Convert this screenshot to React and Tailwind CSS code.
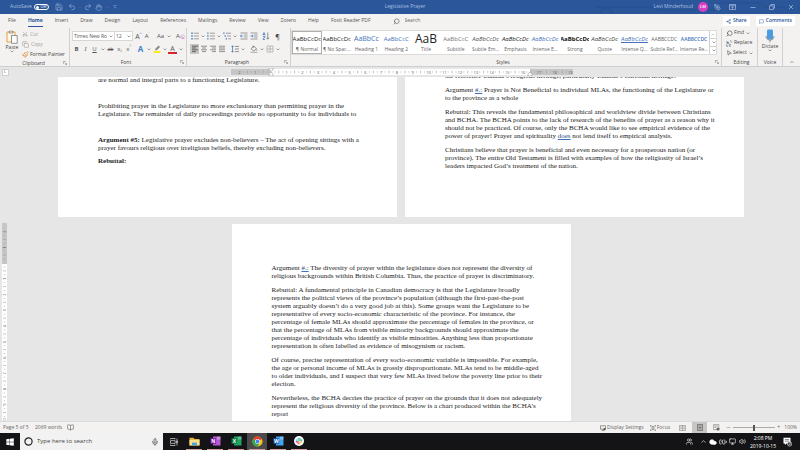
import React from "react";
import {
  Search, Mic, Save, Undo2, Redo2, Hand, PenTool, Scissors, Copy, Paintbrush, Share2, MessageSquare,
  Users, Cloud, Volume2, Monitor, BatteryCharging, ChevronUp, MousePointer2, Eraser, BookOpen, Minus,
} from "lucide-react";

const SANS = "font-['Open_Sans','Noto_Sans',sans-serif]";
const SERIF = "font-['Liberation_Serif','Times_New_Roman',serif]";

function Chev({ className = "" }) {
  return (
    <span className={"flex w-[7px] shrink-0 items-center justify-center " + className}>
      <svg width="4" height="3" viewBox="0 0 4 3" aria-hidden="true">
        <path d="M0.6 0.6 2 2 3.4 0.6" fill="none" stroke="#777" strokeWidth="0.7" />
      </svg>
    </span>
  );
}

function Tool({ label, children, className = "" }) {
  return (
    <button type="button" aria-label={label} className={"flex h-[10px] w-[9px] shrink-0 items-center justify-center leading-none " + className}>
      {children}
    </button>
  );
}

function Lines({ rows, color = "#777" }) {
  return (
    <svg width="8" height="8" viewBox="0 0 8 8" aria-hidden="true">
      {rows.map(([x, w], i) => (
        <path key={i} d={`M${x} ${1.2 + i * 1.8}h${w}`} stroke={color} strokeWidth="0.8" />
      ))}
    </svg>
  );
}

function ListIcon({ kind }) {
  return (
    <svg width="8" height="8" viewBox="0 0 8 8" aria-hidden="true">
      {[1.2, 4, 6.8].map((y, i) => {
        const off = kind === "multi" ? i * 1.2 : 0;
        return (
          <g key={y}>
            {kind === "bullet" ? (
              <rect x="0.3" y={y - 0.7} width="1.4" height="1.4" fill="#2f6fb8" />
            ) : (
              <path d={`M${0.9 + off} ${y - 1}v2`} stroke="#2f6fb8" strokeWidth="0.8" />
            )}
            <path d={`M${2.8 + off} ${y}H8`} stroke="#888" strokeWidth="0.8" />
          </g>
        );
      })}
    </svg>
  );
}

function IndentIcon({ flip }) {
  return (
    <svg width="8" height="8" viewBox="0 0 8 8" aria-hidden="true">
      <path d="M0.5 1h7M4.2 3h3.3M4.2 5h3.3M0.5 7h7" stroke="#777" strokeWidth="0.7" />
      <path d={flip ? "M0.4 4h2.8M2 2.9 3.2 4 2 5.1" : "M3.2 4H0.4M1.6 2.9 0.4 4l1.2 1.1"} stroke="#2f6fb8" strokeWidth="0.7" fill="none" />
    </svg>
  );
}

function Group({ label, launcher, className = "", children }) {
  return (
    <section aria-label={label} className={"flex flex-col border-r border-[#d2d0ce] " + className}>
      <div className="flex h-[31px] items-start">{children}</div>
      <div className="flex h-[8px] items-center text-[5px] leading-[8px] text-[#444]">
        <span className="flex-1 text-center">{label}</span>
        {launcher && (
          <button type="button" aria-label={label + " settings"} className="mr-[2px]">
            <svg width="4" height="4" viewBox="0 0 4 4"><path d="M0.4 3V0.4H3M1.6 1.6 3.5 3.5M3.6 2v1.6H2" fill="none" stroke="#888" strokeWidth="0.6" /></svg>
          </button>
        )}
      </div>
    </section>
  );
}

const tabs = ["File", "Home", "Insert", "Draw", "Design", "Layout", "References", "Mailings", "Review", "View", "Zotero", "Help", "Foxit Reader PDF"];

const styles = [
  ["¶ Normal", "AaBbCcDc", "text-[6px] text-[#222]"],
  ["¶ No Spac...", "AaBbCcDc", "text-[6px] text-[#222]"],
  ["Heading 1", "AaBbCc", "text-[7px] text-[#4472b8]"],
  ["Heading 2", "AaBbCcC", "text-[6px] text-[#4472b8]"],
  ["Title", "AaB", "text-[12px] text-[#222]"],
  ["Subtitle", "AaBbCcC", "text-[6px] text-[#777]"],
  ["Subtle Em...", "AaBbCcDc", "text-[6px] italic text-[#555]"],
  ["Emphasis", "AaBbCcDc", "text-[6px] italic text-[#222]"],
  ["Intense E...", "AaBbCcDc", "text-[6px] italic text-[#4472b8]"],
  ["Strong", "AaBbCcDc", "text-[6px] font-bold text-[#111]"],
  ["Quote", "AaBbCcDc", "text-[6px] italic text-[#444]"],
  ["Intense Q...", "AaBbCcDc", "text-[6px] italic text-[#4472b8] underline"],
  ["Subtle Ref...", "AABBCCDC", "text-[5px] text-[#666]"],
  ["Intense Re...", "AABBCCDC", "text-[5px] font-semibold text-[#4472b8]"],
];

function TitleBar() {
  return (
    <header className="relative flex h-[14px] shrink-0 items-center bg-[#2b579a] pl-[10px] text-[5px] text-[#a9bfe0]">
      <svg className="absolute right-0 top-0" width="210" height="14" viewBox="0 0 210 14" aria-hidden="true">
        <path d="M5 7h58l4 3h60M10 14a6 6 0 0 1 12 0M130 3h40l5 4h20" fill="none" stroke="#264f8f" strokeWidth="1" />
      </svg>
      <div className="relative flex flex-1 items-center">
        <label htmlFor="autosave" className="w-[24px]">AutoSave</label>
        <span className="relative flex h-[6px] w-[15px] items-center rounded-full border border-white">
          <input id="autosave" type="checkbox" className="absolute inset-0 m-0 opacity-0" />
          <span className="ml-px size-[3px] rounded-full bg-white" />
          <span className="flex-1 text-center text-[4px] leading-none text-white">Off</span>
        </span>
        <div className="ml-[5px] flex items-center text-[#8fabd8]">
          <Tool label="Save"><Save size={8} /></Tool>
          <span className="w-[4px]" />
          <Tool label="Undo"><Undo2 size={8} /></Tool>
          <Chev className="opacity-50" />
          <Tool label="Redo"><Redo2 size={8} /></Tool>
          <span className="w-[2px]" />
          <Tool label="Touch mode"><Hand size={7} /></Tool>
          <Chev className="opacity-50" />
          <Tool label="Customize toolbar">
            <svg width="4" height="4" viewBox="0 0 4 4"><path d="M0.5 0.6h3M0.8 2 2 3.2 3.2 2" fill="none" stroke="currentColor" strokeWidth="0.6" /></svg>
          </Tool>
        </div>
      </div>
      <h1 className="relative">Legislative Prayer</h1>
      <div className="relative flex flex-1 items-center justify-end">
        <span>Levi Minderhoud</span>
        <span className="ml-[5px] flex size-[10px] items-center justify-center rounded-full bg-[#d83fc0] text-[4px] font-semibold text-white">LM</span>
        <Tool label="Draw" className="ml-[5px]"><PenTool size={7} /></Tool>
        <Tool label="Ribbon display options" className="ml-[6px]">
          <svg width="7" height="6" viewBox="0 0 7 6"><path d="M0.5 0.5h6v5h-6zM0.5 1.8h6M3.5 4.8V2.8M2.6 3.6l.9-.9.9.9" fill="none" stroke="currentColor" strokeWidth="0.7" /></svg>
        </Tool>
        <Tool label="Minimize" className="ml-[11px]"><svg width="6" height="6"><path d="M0.5 3.5h5" stroke="currentColor" strokeWidth="0.7" /></svg></Tool>
        <Tool label="Restore" className="ml-[10px]"><svg width="6" height="6"><path d="M0.5 1.8h3.7v3.7H0.5zM1.8 1.8V0.5h3.7v3.7H4.2" fill="none" stroke="currentColor" strokeWidth="0.7" /></svg></Tool>
        <Tool label="Close" className="mr-[5px] ml-[10px]"><svg width="6" height="6"><path d="M1 1l4 4M5 1 1 5" stroke="currentColor" strokeWidth="0.7" /></svg></Tool>
      </div>
    </header>
  );
}

function TabRow() {
  return (
    <nav aria-label="Ribbon" className="flex h-[14px] shrink-0 items-center gap-3 pl-[8px] pr-[5px] text-[5px] text-[#555]">
      {tabs.map((t) => (
        <button
          key={t}
          type="button"
          className={"h-[11px] whitespace-nowrap border-b " + (t === "Home" ? "border-[#2b579a] font-bold text-[#2b579a]" : "border-transparent")}
        >
          {t}
        </button>
      ))}
      <label className="ml-[10px] flex flex-1 items-center gap-[5px]">
        <Search size={7} className="-scale-x-100 shrink-0" />
        <input aria-label="Search" placeholder="Search" className="w-full bg-transparent outline-none placeholder:text-[#666]" />
      </label>
      <div className="flex gap-[6px] font-semibold text-[#2b579a]">
        <button type="button" className="flex h-[10px] items-center gap-[2px] bg-white px-[3px]"><Share2 size={5} />Share</button>
        <button type="button" className="flex h-[10px] items-center gap-[2px] bg-white px-[3px]"><MessageSquare size={5} />Comments</button>
      </div>
    </nav>
  );
}

function FontGroup() {
  return (
    <Group label="Font" launcher className="w-[117px] pl-[2px]">
      <div className="flex flex-col gap-[3px] pt-[3px]">
        <div className="flex h-[10px] items-center text-[#555]">
          <div className="flex h-[10px] w-[43px] items-center border border-[#d8d6d4] bg-white">
            <select aria-label="Font" className="h-full min-w-0 flex-1 appearance-none bg-transparent pl-px text-[5px] leading-none outline-none">
              <option>Times New Roman</option>
            </select>
            <Chev />
          </div>
          <div className="flex h-[10px] w-[18px] items-center border border-l-0 border-[#d8d6d4] bg-white">
            <select aria-label="Font size" className="h-full min-w-0 flex-1 appearance-none bg-transparent pl-px text-[5px] leading-none outline-none">
              <option>12</option>
            </select>
            <Chev />
          </div>
          <Tool label="Grow font" className="ml-[1px] text-[7px]">A<sup className="text-[4px] text-[#2f6fb8]">^</sup></Tool>
          <Tool label="Shrink font" className="text-[6px]">A<sup className="text-[4px] text-[#2f6fb8]">ˇ</sup></Tool>
          <Tool label="Change case" className="ml-[4px] text-[6px]">Aa</Tool>
          <Chev />
          <Tool label="Clear formatting" className="ml-[4px] text-[6px]">A<Eraser size={5} color="#b05ac0" /></Tool>
        </div>
        <div className="flex items-center text-[6px] text-[#555]">
          <Tool label="Bold" className="font-bold">B</Tool>
          <Tool label="Italic" className={"italic " + SERIF}>I</Tool>
          <Tool label="Underline" className="underline">U</Tool>
          <Chev />
          <Tool label="Strikethrough" className="text-[5px] line-through">ab</Tool>
          <Tool label="Subscript">x<sub className="text-[4px]">₂</sub></Tool>
          <Tool label="Superscript">x<sup className="text-[4px]">²</sup></Tool>
          <Tool label="Text effects" className="ml-[3px] text-[8px] font-bold text-[#3f83c8]">A</Tool>
          <Chev />
          <Tool label="Highlight">
            <svg width="8" height="8" viewBox="0 0 8 8"><path d="M0.5 6h7v2h-7z" fill="#f7ee1c" /><path d="M2 5.5 2.6 3.6 5.6 0.6 7 2 4 5z" fill="#888" /></svg>
          </Tool>
          <Chev />
          <Tool label="Font color" className="border-b-2 border-[#d8242f] text-[7px]">A</Tool>
          <Chev />
        </div>
      </div>
    </Group>
  );
}

function ParagraphGroup() {
  return (
    <Group label="Paragraph" launcher className="w-[104px] pl-[3px]">
      <div className="flex flex-col gap-[3px] pt-[3px]">
        <div className="flex items-center">
          <Tool label="Bullets"><ListIcon kind="bullet" /></Tool><Chev />
          <Tool label="Numbering"><ListIcon kind="number" /></Tool><Chev />
          <Tool label="Multilevel list"><ListIcon kind="multi" /></Tool><Chev />
          <Tool label="Decrease indent" className="ml-[1px]"><IndentIcon /></Tool>
          <Tool label="Increase indent" className="ml-[1px]"><IndentIcon flip /></Tool>
          <Tool label="Sort" className="ml-[3px]">
            <svg width="8" height="8" viewBox="0 0 8 8"><path d="M0.8 3.4 2 0.5l1.2 2.9M1.2 2.5h1.6M0.9 4.6h2.2L0.9 7.4h2.2" fill="none" stroke="#2f6fb8" strokeWidth="0.7" /><path d="M5.8 0.5v6.6M4.4 5.7l1.4 1.5 1.4-1.5" fill="none" stroke="#666" strokeWidth="0.7" /></svg>
          </Tool>
          <Tool label="Show formatting marks" className="ml-[3px] text-[7px] text-[#444]">¶</Tool>
        </div>
        <div className="flex items-center">
          <Tool label="Align left" className="bg-[#c8c6c4]"><Lines color="#444" rows={[[1, 6], [1, 4], [1, 6], [1, 4]]} /></Tool>
          <Tool label="Center"><Lines rows={[[1, 6], [2, 4], [1, 6], [2, 4]]} /></Tool>
          <Tool label="Align right"><Lines rows={[[1, 6], [3, 4], [1, 6], [3, 4]]} /></Tool>
          <Tool label="Justify"><Lines rows={[[1, 6], [1, 6], [1, 6], [1, 6]]} /></Tool>
          <Tool label="Line spacing" className="ml-[4px]">
            <svg width="8" height="8" viewBox="0 0 8 8"><path d="M3.8 1.4H8M3.8 4H8M3.8 6.6H8" stroke="#777" strokeWidth="0.8" /><path d="M1.5 0.8v6.4M0.4 2l1.1-1.2L2.6 2M0.4 6l1.1 1.2L2.6 6" fill="none" stroke="#2f6fb8" strokeWidth="0.7" /></svg>
          </Tool>
          <Chev />
          <Tool label="Shading" className="ml-[3px]">
            <svg width="8" height="8" viewBox="0 0 8 8"><path d="M1 3.8 3.8 1 6.4 3.8 3.8 6zM3.2 0.5v2.2M6.8 4.4v1.2" fill="none" stroke="#666" strokeWidth="0.7" /><path d="M0.5 7.3h7" stroke="#aaa" strokeWidth="1" /></svg>
          </Tool>
          <Chev />
          <Tool label="Borders">
            <svg width="8" height="8" viewBox="0 0 8 8"><path d="M1 1h6v6H1zM4 1v6M1 4h6" fill="none" stroke="#999" strokeWidth="0.6" /></svg>
          </Tool>
          <Chev />
        </div>
      </div>
    </Group>
  );
}

function Ribbon() {
  return (
    <div className="flex h-[39px] shrink-0 border-b border-[#d0cecc]">
      <Group label="Clipboard" launcher className="w-[70px] pl-[4px]">
        <button type="button" className="flex w-[16px] flex-col items-center text-[5px] leading-[6px] text-[#444]">
          <svg className="mt-[2px]" width="12" height="14" viewBox="0 0 12 14" aria-hidden="true">
            <path d="M1 2h8v10H1z" fill="#faf6ee" stroke="#e0a33c" strokeWidth="1" />
            <path d="M3.2 3V1.4h1a.9.9 0 0 1 1.7 0h1V3z" fill="#fff" stroke="#666" strokeWidth="0.7" />
            <path d="M5.5 5.5h5.7v7.8H5.5z" fill="#fff" stroke="#666" strokeWidth="0.7" />
          </svg>
          Paste
          <Chev />
        </button>
        <div className="ml-[2px] flex flex-col pt-[1px] text-[5px] leading-[10px] text-[#a19f9d]">
          <button type="button" className="flex h-[10px] items-center gap-[2px]"><Scissors size={6} className="-rotate-90" />Cut</button>
          <button type="button" className="flex h-[10px] items-center gap-[2px]"><Copy size={7} />Copy</button>
          <button type="button" className="flex h-[10px] items-center gap-[1px] whitespace-nowrap text-[#444]"><Paintbrush size={7} color="#d58a2a" />Format Painter</button>
        </div>
      </Group>
      <FontGroup />
      <ParagraphGroup />
      <Group label="Styles" launcher className="min-w-0 flex-1">
        <div className="mt-[2px] flex h-[25px] min-w-0 flex-1 border border-[#dddbd9] bg-white">
          <div className="flex min-w-0 flex-1">
            {styles.map(([name, sample, look], i) => (
              <button
                key={name}
                type="button"
                className={"flex min-w-0 flex-1 flex-col items-center overflow-hidden border " + (i === 0 ? "border-[#b0aeac]" : "border-transparent")}
              >
                <span className={"flex h-[14px] w-full items-center justify-center overflow-hidden whitespace-nowrap leading-[14px] " + look}>{sample}</span>
                <span className="whitespace-nowrap text-[5px] leading-[8px] text-[#666]">{name}</span>
              </button>
            ))}
          </div>
          <div className="flex w-[7px] flex-col divide-y divide-[#d2d0ce] border-l border-[#d2d0ce]">
            <button type="button" aria-label="Previous styles" className="flex flex-1 items-center"><Chev className="rotate-180 opacity-50" /></button>
            <button type="button" aria-label="Next styles" className="flex flex-1 items-center"><Chev /></button>
            <button type="button" aria-label="More styles" className="flex flex-1 items-center"><Chev /></button>
          </div>
        </div>
        <span className="w-[4px]" />
      </Group>
      <Group label="Editing" className="w-[36px] pl-[4px]">
        <div className="flex flex-col text-[5px] text-[#444]">
          <button type="button" className="flex h-[10px] items-center gap-[1px]"><Search size={7} className="-scale-x-100" />Find<Chev /></button>
          <button type="button" className="flex h-[10px] items-center gap-[2px]">
            <svg width="6" height="7" viewBox="0 0 6 7"><path d="M1 1v2.6M1 3.6h1.6V2.2H1M4.8 4.4H3.4v1.8h1.4" fill="none" stroke="#666" strokeWidth="0.7" /><path d="M0.6 4.6v1.6h1.4M4 0.6c1 0 1.4.8 1.4 2" fill="none" stroke="#2f6fb8" strokeWidth="0.7" /></svg>
            Replace
          </button>
          <button type="button" className="flex h-[10px] items-center gap-[1px]"><MousePointer2 size={6} className="rotate-12" />Select<Chev /></button>
        </div>
      </Group>
      <Group label="Voice" className="w-[25px]">
        <button type="button" className="flex w-full flex-col items-center text-[5px] leading-[6px] text-[#444]">
          <svg className="mt-[1px]" width="10" height="14" viewBox="0 0 10 14" aria-hidden="true">
            <rect x="2" y="0.5" width="6" height="10" rx="1.4" fill="#4b9be0" />
            <path d="M1 7c0 5.4 8 5.4 8 0M5 11v2.4" fill="none" stroke="#777" strokeWidth="0.8" />
          </svg>
          Dictate
          <Chev />
        </button>
      </Group>
      <div className="flex w-[17px] items-end justify-center pb-[1px]">
        <button type="button" aria-label="Collapse ribbon"><ChevronUp size={6} color="#555" /></button>
      </div>
    </div>
  );
}

const cm = (n) => (n * 40) / 2.54;

function TopRuler() {
  const ticks = Array.from({ length: 22 }, (_, i) => i - 2);
  return (
    <div className="flex h-[10px] shrink-0 bg-[#e6e6e6]">
      <div className="flex w-[10px] items-center justify-center">
        <div className="flex size-[7px] items-center justify-center border border-[#d0d0d0] bg-white text-[4px] leading-none text-[#555]">L</div>
      </div>
      <div className="flex flex-1 items-center justify-center pr-[8px]">
        <svg width="350" height="8" viewBox="-5 0 350 8" role="img" aria-label="Horizontal ruler">
          <path d="M0 1h342v6H0z" fill="#c6c6c6" />
          <path d="M40 1h259v6H40z" fill="#fff" />
          {ticks.map((n) => (
            <g key={n}>
              {n !== 0 && (
                <text x={40 + cm(n)} y="5.5" fontSize="4" fill="#555" textAnchor="middle">{Math.abs(n)}</text>
              )}
              {n < 19 && [0.25, 0.5, 0.75].map((f) => (
                <path key={f} d={`M${40 + cm(n + f)} ${f === 0.5 ? 2.6 : 3.4}v${f === 0.5 ? 2.8 : 1.2}`} stroke="#999" strokeWidth="0.6" />
              ))}
            </g>
          ))}
          <path d="M38 0h4v2l-2 1.4L38 2zM38 8h4V5.6l-2-1.4-2 1.4zM297 8h4V5.6l-2-1.4-2 1.4z" fill="#fafafa" stroke="#888" strokeWidth="0.5" />
        </svg>
      </div>
    </div>
  );
}

function SideRuler() {
  const ticks = Array.from({ length: 13 }, (_, i) => i - 2);
  return (
    <div className="w-[8px] shrink-0 overflow-hidden pl-[2px] pt-[146px]">
      <svg width="5" height="198" viewBox="0 0 5 198" role="img" aria-label="Vertical ruler">
        <path d="M0 0h5v41H0z" fill="#c6c6c6" />
        <path d="M0 41h5v157H0z" fill="#fff" />
        {ticks.map((n) => (
          <g key={n}>
            {n !== 0 && (
              <text transform={`translate(4 ${40 + cm(n)}) rotate(-90)`} fontSize="4" fill="#555" textAnchor="middle">{Math.abs(n)}</text>
            )}
            {[0.25, 0.5, 0.75].map((f) => (
              <path key={f} d={`M${f === 0.5 ? 1.2 : 1.9} ${40 + cm(n + f)}h${f === 0.5 ? 2.8 : 1.2}`} stroke="#999" strokeWidth="0.6" />
            ))}
          </g>
        ))}
      </svg>
    </div>
  );
}

function Para({ lines }) {
  return (
    <p className="whitespace-nowrap">
      {lines.map((line, i) => (
        <React.Fragment key={i}>
          {i > 0 && <br />}
          {line}
        </React.Fragment>
      ))}
    </p>
  );
}

const Flag = ({ children }) => <span className="text-[#2b4f80] underline decoration-[#3b6fc0]">{children}</span>;

function Page({ className = "", children }) {
  return (
    <article className={"flex w-[339px] shrink-0 flex-col overflow-hidden bg-white pl-[40px] text-[7px] leading-[8px] text-[#222] " + SERIF + " " + className}>
      {children}
    </article>
  );
}

function Document() {
  return (
    <main className="flex min-w-0 flex-1 flex-col gap-[7px] overflow-hidden pr-[6px]">
      <div className="flex justify-center gap-[8px]">
        <Page className="gap-[5px]">
          <div className="-mt-[1px]"><Para lines={["are normal and integral parts to a functioning Legislature."]} /></div>
          <p className="h-[8px]" />
          <Para lines={["Prohibiting prayer in the Legislature no more exclusionary than permitting prayer in the", "Legislature. The remainder of daily proceedings provide no opportunity to for individuals to"]} />
          <p className="h-[8px]" />
          <Para lines={[<><b>Argument #5:</b> Legislative prayer excludes non-believers – The act of opening sittings with a</>, "prayer favours religious over irreligious beliefs, thereby excluding non-believers."]} />
          <Para lines={[<b>Rebuttal:</b>]} />
        </Page>
        <Page className="gap-[6px] pb-[47px]">
          <div className="-mt-[5px]"><Para lines={["the reference Canada’s religious heritage, particularly Canada’s Christian heritage."]} /></div>
          <Para lines={[<>Argument <Flag>#.:</Flag> Prayer is Not Beneficial to individual MLAs, the functioning of the Legislature or</>, "to the province as a whole"]} />
          <Para
            lines={[
              "Rebuttal: This reveals the fundamental philosophical and worldview divide between Christians",
              "and BCHA. The BCHA points to the lack of research of the benefits of prayer as a reason why it",
              "should not be practiced. Of course, only the BCHA would like to see empirical evidence of the",
              <>power of prayer! Prayer and spirituality <Flag>does</Flag> not lend itself to empirical analysis.</>,
            ]}
          />
          <Para
            lines={[
              "Christians believe that prayer is beneficial and even necessary for a prosperous nation (or",
              "province). The entire Old Testament is filled with examples of how the religiosity of Israel’s",
              "leaders impacted God’s treatment of the nation.",
            ]}
          />
        </Page>
      </div>
      <div className="flex min-h-0 flex-1 justify-center">
        <Page className="gap-[6px] pt-[40px]">
          <Para lines={[<>Argument <Flag>#.:</Flag> The diversity of prayer within the legislature does not represent the diversity of</>, "religious backgrounds within British Columbia. Thus, the practice of prayer is discriminatory."]} />
          <Para
            lines={[
              "Rebuttal: A fundamental principle in Canadian democracy is that the Legislature broadly",
              "represents the political views of the province’s population (although the first-past-the-post",
              "system arguably doesn’t do a very good job at this). Some groups want the Legislature to be",
              "representative of every socio-economic characteristic of the province. For instance, the",
              "percentage of female MLAs should approximate the percentage of females in the province, or",
              "that the percentage of MLAs from visible minority backgrounds should approximate the",
              "percentage of individuals who identify as visible minorities. Anything less than proportionate",
              "representation is often labelled as evidence of misogynism or racism.",
            ]}
          />
          <Para
            lines={[
              "Of course, precise representation of every socio-economic variable is impossible. For example,",
              "the age or personal income of MLAs is grossly disproportionate. MLAs tend to be middle-aged",
              "to older individuals, and I suspect that very few MLAs lived below the poverty line prior to their",
              "election.",
            ]}
          />
          <Para
            lines={[
              "Nevertheless, the BCHA decries the practice of prayer on the grounds that it does not adequately",
              "represent the religious diversity of the province. Below is a chart produced within the BCHA’s",
              "report",
            ]}
          />
        </Page>
      </div>
    </main>
  );
}

function StatusBar() {
  return (
    <footer className="flex h-[12px] shrink-0 items-center border-t border-[#dcdad8] bg-[#f3f2f1] pl-[3px] pr-[3px] text-[5px] text-[#666]">
      <span className="w-[32px]">Page 5 of 5</span>
      <span className="w-[31px]">2069 words</span>
      <Tool label="Proofing"><BookOpen size={7} /></Tool>
      <div className="flex flex-1 items-center justify-end">
        <button type="button" className="flex items-center gap-[1px]">
          <svg width="6" height="6" viewBox="0 0 6 6"><path d="M0.5 0.8h5v3.4h-5zM1.6 5.5h2.8" fill="none" stroke="#555" strokeWidth="0.6" /><circle cx="4.5" cy="4.2" r="1.1" fill="#555" /></svg>
          Display Settings
        </button>
        <button type="button" className="ml-[6px] flex items-center gap-[1px]">
          <svg width="6" height="6" viewBox="0 0 6 6"><path d="M0.4 1.6V0.4h1.2M4.4 0.4h1.2v1.2M5.6 4.4v1.2H4.4M1.6 5.6H0.4V4.4M2 1.6h2v2.8H2z" fill="none" stroke="#555" strokeWidth="0.6" /></svg>
          Focus
        </button>
        <Tool label="Read mode" className="ml-[8px]"><svg width="7" height="6" viewBox="0 0 7 6"><path d="M0.4 0.6h6.2v4.8H0.4zM3.5 0.6v4.8M1.2 2h1.5M1.2 3.5h1.5M4.3 2h1.5M4.3 3.5h1.5" fill="none" stroke="#666" strokeWidth="0.5" /></svg></Tool>
        <button type="button" aria-label="Print layout" className="ml-[5px] flex h-[11px] w-[15px] items-center justify-center bg-[#c8c6c4]"><svg width="6" height="7" viewBox="0 0 6 7"><path d="M0.4 0.4h5.2v6.2H0.4zM1.4 2h3.2M1.4 3.5h3.2M1.4 5h3.2" fill="none" stroke="#444" strokeWidth="0.6" /></svg></button>
        <Tool label="Web layout" className="ml-[5px]"><svg width="7" height="7" viewBox="0 0 7 7"><path d="M0.4 0.6h5.4v5H0.4zM1.2 2h3.6M1.2 3.4h2" fill="none" stroke="#666" strokeWidth="0.5" /><circle cx="5" cy="5" r="1.6" fill="#666" /></svg></Tool>
        <button type="button" aria-label="Zoom out" className="ml-[5px]"><Minus size={5} /></button>
        <input
          type="range"
          aria-label="Zoom"
          min="0"
          max="100"
          defaultValue="50"
          className="mx-[2px] h-[7px] w-[42px] appearance-none bg-[linear-gradient(#aaa,#aaa)] bg-[length:100%_1px] bg-center bg-no-repeat [&::-webkit-slider-thumb]:h-[6px] [&::-webkit-slider-thumb]:w-[2px] [&::-webkit-slider-thumb]:appearance-none [&::-webkit-slider-thumb]:bg-[#555]"
        />
        <button type="button" aria-label="Zoom in" className="leading-none">+</button>
        <span className="ml-[4px] w-[13px] text-right">100%</span>
      </div>
    </footer>
  );
}

function AppTile({ letter, back, front }) {
  return (
    <svg width="11" height="10" viewBox="0 0 11 10" aria-hidden="true">
      <path d="M3 0.5h7.5v9H3z" fill={back} />
      <path d="M7 0.5h3.5v3H7z" fill="#fff" opacity="0.3" />
      <path d="M0.5 2.2h5.6v5.6H0.5z" fill={front} />
      <text x="3.3" y="6.7" fontSize="5" fontWeight="700" fill="#fff" textAnchor="middle">{letter}</text>
    </svg>
  );
}

const apps = [
  ["File Explorer", <svg width="11" height="9" viewBox="0 0 11 9"><path d="M0.5 0.8h4l1 1.2h5v6.4h-10z" fill="#e8b33c" /><path d="M0.5 3h10v5.4h-10z" fill="#fbe08a" /><path d="M3 5.6h5v2.8H3z" fill="#4ba3dd" /></svg>],
  ["OneNote", <AppTile letter="N" back="#b25bd0" front="#7719aa" />],
  ["Excel", <AppTile letter="X" back="#21a366" front="#107c41" />],
  ["Chrome", (
    <svg width="11" height="11" viewBox="0 0 24 24">
      <circle cx="12" cy="12" r="11" fill="#fbc116" />
      <path d="M12 12 2.5 6.5A11 11 0 0 1 21.5 6.5z" fill="#e33b2e" />
      <path d="M12 12 2.5 6.5A11 11 0 0 0 12 23l3-5z" fill="#2da94f" />
      <circle cx="12" cy="12" r="5.4" fill="#fff" />
      <circle cx="12" cy="12" r="4.2" fill="#4285f4" />
    </svg>
  )],
  ["Word", <AppTile letter="W" back="#41a5ee" front="#185abd" />],
  ["Slack", (
    <svg width="10" height="10" viewBox="0 0 20 20">
      <circle cx="10" cy="10" r="10" fill="#fff" />
      <g strokeWidth="2.4" strokeLinecap="round">
        <path d="M8.4 4.5v4M4.5 8.4h1" stroke="#36c5f0" />
        <path d="M11.5 8.4h4M11.6 4.6v1" stroke="#2eb67d" />
        <path d="M11.6 11.6v4M14.5 11.6h1" stroke="#ecb22e" />
        <path d="M4.5 11.6h4M8.4 14.5v1" stroke="#e01e5a" />
      </g>
    </svg>
  )],
];

function Taskbar() {
  return (
    <div className="flex h-[17px] shrink-0 items-stretch bg-[#141416] text-white">
      <button type="button" aria-label="Start" className="flex w-[20px] items-center justify-center">
        <svg width="8" height="8" viewBox="0 0 8 8"><path d="M0.3 1.2 3.6 0.8v3H0.3zM4 0.7 7.8 0.2v3.6H4zM0.3 4.2h3.3v3L0.3 6.8zM4 4.2h3.8v3.6L4 7.3z" fill="#fff" /></svg>
      </button>
      <label className="flex w-[143px] items-center bg-[#f2f2f2] px-[4px] text-[6px] text-[#444]">
        <svg width="9" height="9" viewBox="0 0 9 9" aria-hidden="true"><circle cx="4.5" cy="4.5" r="3.6" fill="none" stroke="#222" strokeWidth="1.2" /></svg>
        <input aria-label="Search Windows" placeholder="Type here to search" className="ml-[4px] min-w-0 flex-1 bg-transparent outline-none placeholder:text-[#444]" />
        <Mic size={8} />
      </label>
      <button type="button" aria-label="Task view" className="flex w-[21px] items-center justify-center">
        <svg width="8" height="8" viewBox="0 0 8 8"><path d="M0.5 2.6h4.6v2.8H0.5zM0.5 1.4V0.5h4.6v0.9M0.5 6.6v0.9h4.6V6.6M7 0.5v7M6.3 3.2h1.4v1.4H6.3z" fill="none" stroke="#ddd" strokeWidth="0.7" /></svg>
      </button>
      {apps.map(([name, icon]) => (
        <button
          key={name}
          type="button"
          aria-label={name}
          className={"mr-px flex w-[20px] flex-col items-center justify-between " + (name === "Chrome" ? "bg-[#4a4a4c]" : "")}
        >
          <span className="flex flex-1 items-center">{icon}</span>
          <span className="h-px w-[16px] bg-[#d09a98]" />
        </button>
      ))}
      <div className="flex flex-1 items-center justify-end pr-[8px]">
        <Tool label="People" className="mr-[5px]"><Users size={7} /></Tool>
        <Tool label="Hidden icons"><ChevronUp size={7} /></Tool>
        <Tool label="OneDrive"><Cloud size={8} fill="#fff" /></Tool>
        <Tool label="Battery" className="ml-[1px]"><BatteryCharging size={8} /></Tool>
        <Tool label="Network" className="ml-[1px]"><Monitor size={7} /></Tool>
        <Tool label="Volume" className="ml-[1px]"><Volume2 size={7} /></Tool>
        <div className="ml-[3px] w-[26px] text-center text-[5px] leading-[8px]">
          <div>2:08 PM</div>
          <div className="whitespace-nowrap">2019-10-15</div>
        </div>
        <button type="button" aria-label="Notifications" className="ml-[7px]">
          <svg width="9" height="10" viewBox="0 0 9 10"><path d="M0.5 0.8h7v5.6h-4l-1.6 1.6V6.4H0.5z" fill="#fff" /><path d="M1.8 2.6h4.4M1.8 4.2h4.4" stroke="#333" strokeWidth="0.6" /><circle cx="6.6" cy="7" r="2.2" fill="#333" stroke="#fff" strokeWidth="0.5" /><text x="6.6" y="8.3" fontSize="4" fill="#fff" textAnchor="middle">2</text></svg>
        </button>
      </div>
    </div>
  );
}

export default function App() {
  return (
    <div className={"flex h-screen min-w-[800px] flex-col overflow-hidden bg-[#f3f2f1] " + SANS}>
      <TitleBar />
      <TabRow />
      <Ribbon />
      <TopRuler />
      <div className="flex min-h-0 flex-1 overflow-hidden bg-[#e6e6e6]">
        <SideRuler />
        <Document />
      </div>
      <StatusBar />
      <Taskbar />
    </div>
  );
}
